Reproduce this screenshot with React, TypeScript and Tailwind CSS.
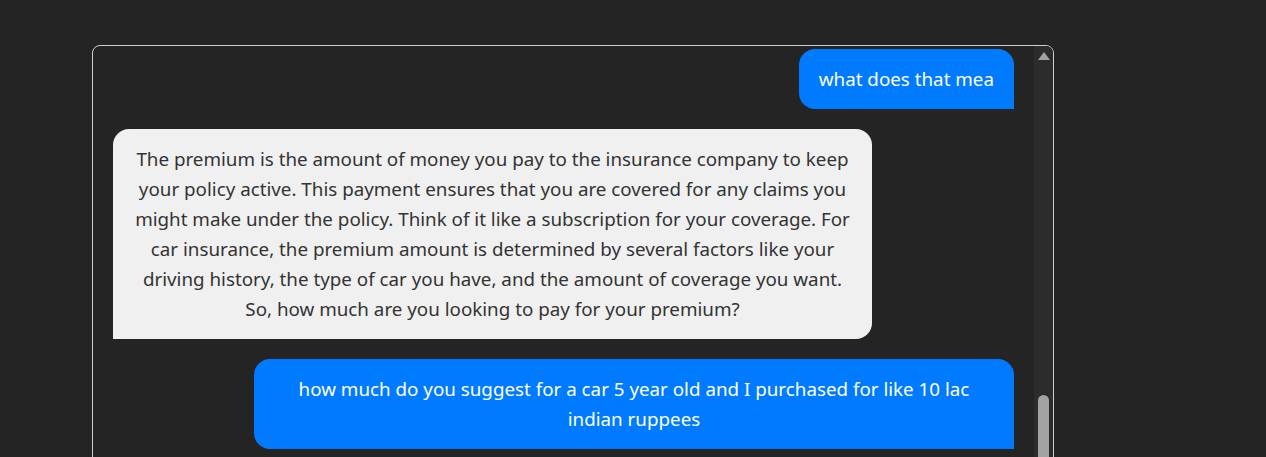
const font = { fontFamily: '"Noto Sans", "Open Sans", sans-serif' };

const assistantLines = [
  "The premium is the amount of money you pay to the insurance company to keep",
  "your policy active. This payment ensures that you are covered for any claims you",
  "might make under the policy. Think of it like a subscription for your coverage. For",
  "car insurance, the premium amount is determined by several factors like your",
  "driving history, the type of car you have, and the amount of coverage you want.",
  "So, how much are you looking to pay for your premium?",
];

const Lines = ({ lines }: { lines: string[] }) => (
  <>
    {lines.map((l, i) => (
      <span key={i} className="block whitespace-nowrap">
        {l}
      </span>
    ))}
  </>
);

export default function App() {
  return (
    <div className="min-h-[457px] h-[457px] overflow-hidden bg-[#242424]" style={font}>
      <div className="ml-[92px] mt-[45px] w-[962px] h-[440px] rounded-[8px] border border-[#cfcfcf] flex overflow-hidden">
        <div className="flex-1 flex flex-col gap-[20px] pt-[3px] pl-[20px] pr-[20px] text-[18.8px] leading-[30px]">
          <div className="self-end bg-[#007bff] text-white rounded-[16px] rounded-br-none px-[20px] py-[15px] whitespace-nowrap">
            what does that mea
          </div>
          <div className="self-start bg-[#f0f0f0] text-[#333333] rounded-[16px] rounded-bl-none w-[759px] py-[15px] text-center">
            <Lines lines={assistantLines} />
          </div>
          <div className="self-end bg-[#007bff] text-white rounded-[16px] rounded-br-none w-[760px] py-[15px] text-center">
            <Lines
              lines={[
                "how much do you suggest for a car 5 year old and I purchased for like 10 lac",
                "indian ruppees",
              ]}
            />
          </div>
        </div>
        <div className="w-[19px] bg-[#2c2c2c] flex flex-col items-center">
          <svg width="12" height="8" viewBox="0 0 12 8" className="mt-[6px]">
            <polygon points="6,0 12,8 0,8" fill="#a3a3a3" />
          </svg>
          <div className="mt-[335px] w-[11px] h-[80px] rounded-t-full bg-[#a3a3a3]" />
        </div>
      </div>
    </div>
  );
}
